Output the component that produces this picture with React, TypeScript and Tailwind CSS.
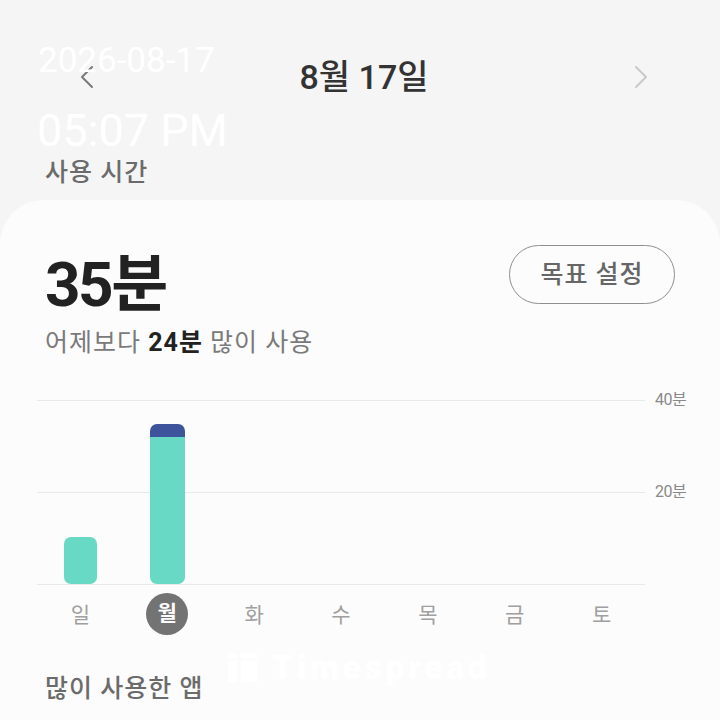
import React from 'react';

const DAYS = ['일', '월', '화', '수', '목', '금', '토'];

// minutes per day: [main, extra]
const USAGE: Record<number, { main: number; extra: number }> = {
  0: { main: 47, extra: 0 },
  1: { main: 147, extra: 13 },
};

function Chevron({ dir, color }: { dir: 'left' | 'right'; color: string }) {
  const points = dir === 'left' ? '12,2 2,12 12,22' : '2,2 12,12 2,22';
  return (
    <svg width="14" height="24" viewBox="0 0 14 24" fill="none">
      <polyline points={points} stroke={color} strokeWidth="2" strokeLinecap="round" strokeLinejoin="round" />
    </svg>
  );
}

function Chart() {
  return (
    <div className="flex mt-[42px] -mr-[45px]">
      <div className="grid w-[608px] shrink-0 ml-[-8px]">
        <div className="col-start-1 row-start-1 flex flex-col border-b border-[#e9e9e9]">
          <div className="h-[92px] border-t border-[#e9e9e9]" />
          <div className="h-[92px] border-t border-[#e9e9e9]" />
        </div>
        <div className="col-start-1 row-start-1 grid grid-cols-7 items-end pb-[1px]">
          {DAYS.map((d, i) => {
            const u = USAGE[i];
            if (!u) return <div key={d} />;
            return (
              <div key={d} className="flex justify-center">
                <div
                  className={`flex flex-col overflow-hidden rounded-[7px] ${i === 1 ? 'w-[35px]' : 'w-[33px]'}`}
                  style={{ height: u.main + u.extra }}
                >
                  {u.extra > 0 && <div className="bg-[#3d549c]" style={{ height: u.extra }} />}
                  <div className="flex-1 bg-[#67d9c4]" />
                </div>
              </div>
            );
          })}
        </div>
      </div>
      <div className="flex flex-col pl-[10px] text-[16px] text-[#8a8a8a] tracking-[-0.5px] whitespace-nowrap">
        <div className="h-[92px] leading-[20px] -mt-[10px]">40분</div>
        <div className="h-[92px] leading-[20px]">20분</div>
      </div>
    </div>
  );
}

export default function App() {
  return (
    <div className="relative w-[720px] h-[720px] overflow-hidden bg-[#f5f5f5] flex flex-col font-['Roboto','Noto_Sans_CJK_KR',sans-serif]">
      <div className="flex items-center justify-between h-[42px] mt-[56px] pl-[80px] pr-[72px]">
        <Chevron dir="left" color="#7a7a7a" />
        <div className="text-[34px] font-medium text-[#333333] leading-none">8월 17일</div>
        <Chevron dir="right" color="#c9c9c9" />
      </div>

      <div className="mt-[59px] pl-[45px] text-[25px] tracking-[1px] leading-[32px] font-medium text-[#6b6b6b]">사용 시간</div>

      <div className="mt-[11px] flex-1 rounded-t-[44px] bg-[#fcfcfc] px-[45px]">
        <div className="flex items-start justify-between pt-[45px]">
          <div className="mt-[9px] text-[62px] leading-none font-bold text-[#222222] tracking-[-2.5px]">35분</div>
          <button className="h-[59px] w-[166px] rounded-full border-[1.5px] border-[#8f8f8f] text-[25px] tracking-[1px] font-medium text-[#666666]">
            목표 설정
          </button>
        </div>
        <div className="mt-[12px] text-[25px] tracking-[1px] leading-[30px] text-[#7a7a7a]">
          어제보다 <span className="font-bold text-[#222222]">24분</span> 많이 사용
        </div>

        <Chart />

        <div className="grid grid-cols-7 w-[608px] ml-[-8px] mt-[8px] h-[42px] items-center text-[21px] text-[#a0a0a0]">
          {DAYS.map((d, i) => (
            <div key={d} className="flex justify-center">
              {i === 1 ? (
                <div className="w-[42px] h-[42px] rounded-full bg-[#737373] text-white font-bold flex items-center justify-center">
                  {d}
                </div>
              ) : (
                <span className="pt-[4px]">{d}</span>
              )}
            </div>
          ))}
        </div>

        <div className="mt-[38px] text-[25px] tracking-[1px] leading-[32px] font-medium text-[#6b6b6b]">많이 사용한 앱</div>
      </div>

      {/* overlays */}
      <div className="absolute left-[38px] top-[43px] text-[35px] leading-none text-white">2026-08-17</div>
      <div className="absolute left-[37px] top-[108px] text-[45px] leading-none text-white">05:07 PM</div>
      <div className="absolute left-[228px] top-[650px] flex items-center gap-[15px] text-white">
        <svg width="29" height="29" viewBox="0 0 29 29" fill="white">
          <rect x="0" y="0" width="9" height="5" />
          <rect x="13" y="0" width="16" height="5" />
          <rect x="0" y="8" width="9" height="21" />
          <rect x="13" y="8" width="16" height="21" />
        </svg>
        <span className="text-[34px] leading-none font-black tracking-[3.5px]">Timespread</span>
      </div>
    </div>
  );
}
